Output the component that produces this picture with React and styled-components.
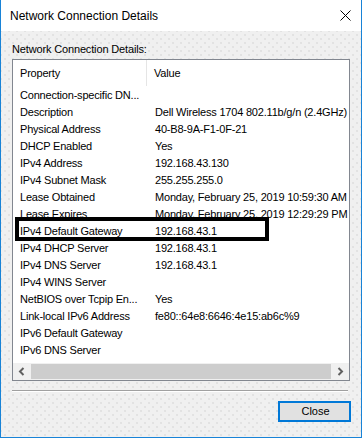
import React from "react";
import styled, { createGlobalStyle } from "styled-components";

const Global = createGlobalStyle`
  html, body { margin: 0; padding: 0; background: #ffffff; }
  * { box-sizing: border-box; }
`;

const Window = styled.div`
  width: 362px;
  height: 438px;
  display: flex;
  flex-direction: column;
  border: 1px solid #1883d7;
  border-top: none;
  font-family: "Liberation Sans", Arial, sans-serif;
  color: #000;
  overflow: hidden;
`;

const TitleBar = styled.div`
  height: 31px;
  flex: none;
  background: #ffffff;
  display: flex;
  align-items: center;
  justify-content: space-between;
  padding: 0 10px 0 9px;
  font-size: 12px;
`;

const TitleText = styled.span`
  line-height: 14px;
  padding-top: 1px;
`;

const Body = styled.div`
  flex: 1;
  display: flex;
  flex-direction: column;
  padding: 0 11px;
  background-color: #f0f0f0;
  background-image: radial-gradient(circle, #dadada 0.6px, transparent 0.9px),
    radial-gradient(circle, #dadada 0.6px, transparent 0.9px);
  background-size: 8px 8px, 8px 8px;
  background-position: 0 0, 4px 4px;
`;

const Label = styled.div`
  padding-top: 11px;
  height: 25px;
  line-height: 14px;
  font-size: 11px;
  letter-spacing: -0.15px;
  margin-bottom: 3px;
`;

const ListBox = styled.div`
  height: 322px;
  flex: none;
  border: 1px solid #828790;
  background: #ffffff;
  display: flex;
  flex-direction: column;
  font-size: 11px;
  letter-spacing: -0.2px;
`;

const Header = styled.div`
  height: 26px;
  flex: none;
  display: flex;
  align-items: center;
`;

const HeadCell = styled.div`
  width: ${(p) => (p.$first ? "134px" : "auto")};
  flex: ${(p) => (p.$first ? "none" : "1")};
  height: 100%;
  display: flex;
  align-items: center;
  padding-left: ${(p) => (p.$first ? "7px" : "7px")};
  padding-bottom: 1px;
  border-right: ${(p) => (p.$first ? "1px solid #e5e5e5" : "none")};
`;

const Rows = styled.div`
  flex: 1;
  display: flex;
  flex-direction: column;
`;

const Row = styled.div`
  position: relative;
  height: 17px;
  flex: none;
  display: flex;
  align-items: center;
  white-space: nowrap;
`;

const Cell = styled.div`
  width: ${(p) => (p.$first ? "134px" : "auto")};
  flex: ${(p) => (p.$first ? "none" : "1")};
  padding-left: ${(p) => (p.$first ? "7px" : "8px")};
  overflow: hidden;
  white-space: nowrap;
`;

const Highlight = styled.div`
  position: absolute;
  left: 2px;
  top: -5px;
  width: 254px;
  height: 24px;
  border: 4px solid #000;
  pointer-events: none;
`;

const ScrollBar = styled.div`
  height: 17px;
  flex: none;
  display: flex;
  align-items: center;
  background: #f0f0f0;
`;

const ArrowBtn = styled.div`
  width: 18px;
  height: 17px;
  flex: none;
  display: flex;
  align-items: center;
  justify-content: center;
`;

const Track = styled.div`
  flex: 1;
  height: 17px;
  display: flex;
  align-items: center;
`;

const Thumb = styled.div`
  height: 15px;
  width: 100%;
  background: #cdcdcd;
`;

const Separator = styled.div`
  margin-top: 9px;
  margin-right: 2px;
  height: 2px;
  border-top: 1px solid #a0a0a0;
  border-bottom: 1px solid #ffffff;
`;

const Footer = styled.div`
  display: flex;
  justify-content: flex-end;
  margin-top: 9px;
  margin-right: -1px;
`;

const Button = styled.button`
  width: 73px;
  height: 21px;
  border: 2px solid #0078d7;
  background: #e1e1e1;
  font-family: "Liberation Sans", Arial, sans-serif;
  font-size: 11px;
  color: #000;
  padding: 0;
  padding-left: 2px;
  line-height: 15px;
`;

const rows = [
  ["Connection-specific DN...", ""],
  ["Description", "Dell Wireless 1704 802.11b/g/n (2.4GHz)"],
  ["Physical Address", "40-B8-9A-F1-0F-21"],
  ["DHCP Enabled", "Yes"],
  ["IPv4 Address", "192.168.43.130"],
  ["IPv4 Subnet Mask", "255.255.255.0"],
  ["Lease Obtained", "Monday, February 25, 2019 10:59:30 AM"],
  ["Lease Expires", "Monday, February 25, 2019 12:29:29 PM"],
  ["IPv4 Default Gateway", "192.168.43.1", true],
  ["IPv4 DHCP Server", "192.168.43.1"],
  ["IPv4 DNS Server", "192.168.43.1"],
  ["IPv4 WINS Server", ""],
  ["NetBIOS over Tcpip En...", "Yes"],
  ["Link-local IPv6 Address", "fe80::64e8:6646:4e15:ab6c%9"],
  ["IPv6 Default Gateway", ""],
  ["IPv6 DNS Server", ""],
];

const CloseX = () => (
  <svg width="11" height="11" viewBox="0 0 11 11">
    <path d="M0.5 0.5 L10.5 10.5 M10.5 0.5 L0.5 10.5" stroke="#000" strokeWidth="1" />
  </svg>
);

const Chevron = ({ dir }) => (
  <svg width="8" height="9" viewBox="0 0 8 9">
    <path
      d={dir === "left" ? "M5.5 1 L2 4.5 L5.5 8" : "M2.5 1 L6 4.5 L2.5 8"}
      stroke="#606060"
      strokeWidth="2"
      fill="none"
    />
  </svg>
);

export default function App() {
  return (
    <>
      <Global />
      <Window>
        <TitleBar>
          <TitleText>Network Connection Details</TitleText>
          <CloseX />
        </TitleBar>
        <Body>
          <Label>Network Connection Details:</Label>
          <ListBox>
            <Header>
              <HeadCell $first>Property</HeadCell>
              <HeadCell>Value</HeadCell>
            </Header>
            <Rows>
              {rows.map(([k, v, hl]) => (
                <Row key={k}>
                  <Cell $first>{k}</Cell>
                  <Cell>{v}</Cell>
                  {hl && <Highlight />}
                </Row>
              ))}
            </Rows>
            <ScrollBar>
              <ArrowBtn>
                <Chevron dir="left" />
              </ArrowBtn>
              <Track>
                <Thumb />
              </Track>
              <ArrowBtn>
                <Chevron dir="right" />
              </ArrowBtn>
            </ScrollBar>
          </ListBox>
          <Separator />
          <Footer>
            <Button>Close</Button>
          </Footer>
        </Body>
      </Window>
    </>
  );
}
